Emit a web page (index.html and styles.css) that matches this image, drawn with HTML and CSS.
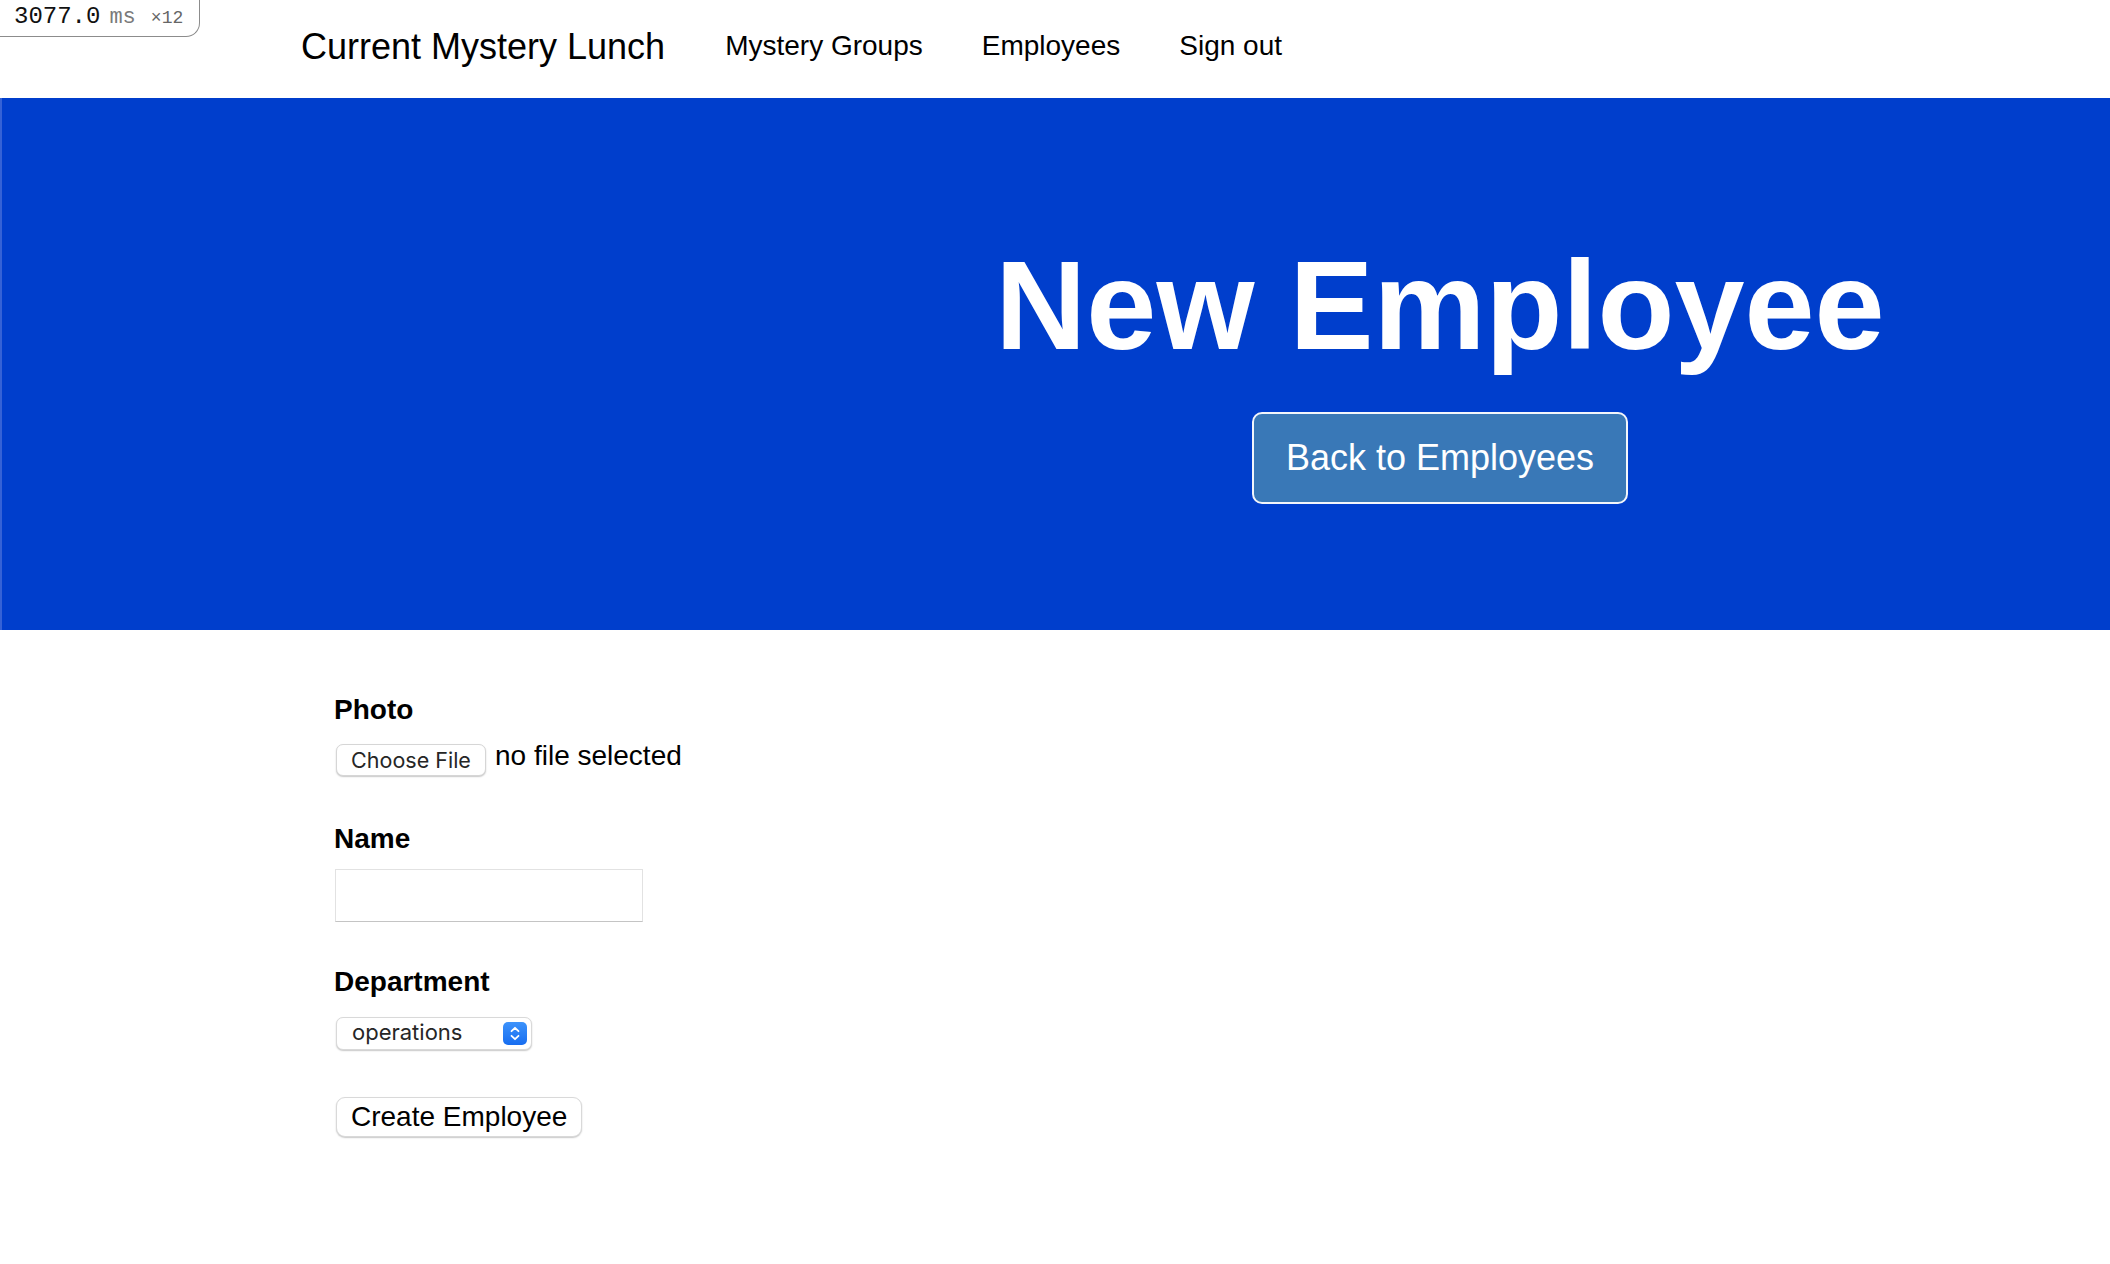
FILE: index.html
```html
<!DOCTYPE html>
<html lang="en">
<head>
<meta charset="utf-8">
<title>New Employee</title>
<link rel="stylesheet" href="styles.css">
</head>
<body>
<div class="perf-badge"><span class="perf-val">3077.0</span><span class="perf-unit">ms</span><span class="perf-count">×12</span></div>

<header class="topnav">
  <a class="brand" href="#">Current Mystery Lunch</a>
  <nav class="links">
    <a href="#">Mystery Groups</a>
    <a href="#">Employees</a>
    <a href="#">Sign out</a>
  </nav>
</header>

<section class="hero">
  <div class="hero-inner">
    <h1 class="hero-title">New Employee</h1>
    <a class="btn-back" href="#">Back to Employees</a>
  </div>
</section>

<main class="form">
  <div class="field field-photo">
    <label class="field-label">Photo</label>
    <div class="file-row">
      <span class="file-btn">Choose File</span>
      <span class="file-name">no file selected</span>
    </div>
  </div>

  <div class="field field-name">
    <label class="field-label" for="name">Name</label>
    <input class="text-input" id="name" type="text">
  </div>

  <div class="field field-dept">
    <label class="field-label">Department</label>
    <div class="select-box">
      <span class="select-value">operations</span>
      <svg class="stepper" width="24" height="23" viewBox="0 0 24 23">
        <defs>
          <linearGradient id="stepg" x1="0" y1="0" x2="0" y2="1">
            <stop offset="0" stop-color="#3d93fb"/>
            <stop offset="1" stop-color="#176df0"/>
          </linearGradient>
        </defs>
        <rect x="0" y="0" width="24" height="23" rx="5" fill="url(#stepg)"/>
        <path d="M8.5 9.2 L12 5.8 L15.5 9.2" fill="none" stroke="#fff" stroke-width="1.8" stroke-linecap="round" stroke-linejoin="round"/>
        <path d="M8.5 13.8 L12 17.2 L15.5 13.8" fill="none" stroke="#fff" stroke-width="1.8" stroke-linecap="round" stroke-linejoin="round"/>
      </svg>
    </div>
  </div>

  <button class="submit-btn" type="button">Create Employee</button>
</main>
</body>
</html>
```

FILE: styles.css
```css
html, body {
  margin: 0;
  padding: 0;
  background: #fff;
}

body {
  font-family: "Liberation Sans", Arial, Helvetica, sans-serif;
  color: #000;
}

a {
  color: inherit;
  text-decoration: none;
}

/* perf overlay badge */
.perf-badge {
  position: absolute;
  top: 0;
  left: 0;
  width: 185px;
  height: 36px;
  padding-left: 14px;
  background: #fff;
  border-right: 1.5px solid #8c8c8c;
  border-bottom: 1.5px solid #8c8c8c;
  border-bottom-right-radius: 14px;
  font-family: "Liberation Mono", "Courier New", monospace;
  display: flex;
  align-items: baseline;
  line-height: 34px;
  white-space: nowrap;
}

.perf-val {
  font-size: 24px;
  color: #111;
}

.perf-unit {
  font-size: 22px;
  color: #7a7a7a;
  margin-left: 9px;
}

.perf-count {
  font-size: 18px;
  color: #666;
  margin-left: 15px;
}

/* top navigation */
.topnav {
  height: 98px;
  box-sizing: border-box;
  padding: 26px 0 0 301px;
  display: flex;
  align-items: flex-start;
  gap: 60px;
}

.brand {
  font-size: 36px;
  line-height: 1.15;
}

.links {
  display: flex;
  align-items: flex-start;
  gap: 59px;
  margin-top: 4px;
}

.links a {
  font-size: 28px;
  line-height: 1.15;
}

/* hero */
.hero {
  background: #003ecc;
  border-left: 2px solid #3562d6;
  padding: 136px 0 126px 768px;
}

.hero-inner {
  text-align: center;
}

.hero-title {
  margin: 0;
  font-size: 126px;
  font-weight: bold;
  line-height: 1.15;
  color: #fff;
}

.btn-back {
  display: inline-block;
  margin-top: 33px;
  padding: 23.5px 32px;
  font-size: 36px;
  line-height: 1.15;
  color: #fff;
  background: #3978b7;
  border: 2px solid #f2f5fb;
  border-radius: 10px;
}

/* form */
.form {
  padding: 64px 0 80px 334px;
}

.field-label {
  display: block;
  font-size: 28px;
  font-weight: bold;
  line-height: 1.15;
}

.field-photo {
  margin-bottom: 47px;
}

.field-name {
  margin-bottom: 44px;
}

.field-dept {
  margin-bottom: 47px;
}

.file-row {
  margin-top: 14px;
  display: flex;
  align-items: flex-start;
  gap: 9px;
}

.file-btn {
  margin-top: 4px;
  margin-left: 2px;
  box-sizing: border-box;
  width: 150px;
  height: 32px;
  display: flex;
  align-items: center;
  justify-content: center;
  font-family: Inter, "Liberation Sans", sans-serif;
  font-size: 21.5px;
  color: #262626;
  background: #fff;
  border: 1px solid #d6d6d6;
  border-radius: 7px;
  box-shadow: 0 1px 1.5px rgba(0, 0, 0, 0.22);
}

.file-name {
  font-size: 28px;
  line-height: 1.15;
}

.text-input {
  display: block;
  margin: 13px 0 0 1px;
  box-sizing: border-box;
  width: 308px;
  height: 53px;
  border: 1px solid #e2e2e2;
  border-bottom: 1px solid #c4c4c4;
  border-radius: 0;
  background: #fff;
  padding: 0 10px;
  font-size: 23px;
  outline: none;
}

.select-box {
  margin: 19px 0 0 2px;
  box-sizing: border-box;
  width: 196px;
  height: 33px;
  display: flex;
  align-items: center;
  justify-content: space-between;
  padding: 0 4px 0 15px;
  background: #fff;
  border: 1px solid #d9d9d9;
  border-radius: 7px;
  box-shadow: 0 1px 1.5px rgba(0, 0, 0, 0.22);
}

.select-value {
  font-family: Inter, "Liberation Sans", sans-serif;
  font-size: 22px;
  color: #262626;
  line-height: 1;
  padding-bottom: 2px;
}

.stepper {
  display: block;
  margin-top: 1px;
}

.submit-btn {
  display: block;
  margin-left: 2px;
  box-sizing: border-box;
  height: 40px;
  padding: 0 14px;
  font-family: "Liberation Sans", Arial, Helvetica, sans-serif;
  font-size: 28px;
  line-height: 1;
  color: #000;
  background: #fff;
  border: 1px solid #d9d9d9;
  border-radius: 9px;
  box-shadow: 0 1px 1.5px rgba(0, 0, 0, 0.22);
}
```
